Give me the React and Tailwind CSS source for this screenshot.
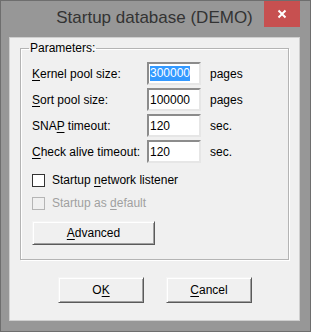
import React from "react";

const sunken =
  "border-2 border-t-[#8c8c8c] border-l-[#8c8c8c] border-r-[#e6e6e6] border-b-[#e6e6e6] bg-white";
const raised =
  "border border-t-[#f4f4f4] border-l-[#f4f4f4] border-r-[#5a5a5a] border-b-[#5a5a5a] shadow-[inset_1px_1px_0_#ffffff,inset_-1px_-1px_0_#a0a0a0] bg-[#f0f0f0]";

function Row({ label, u, value, unit, selected }) {
  const i = label.indexOf(u);
  return (
    <div className="flex h-[23px] items-center">
      <div className="w-[126px] pl-[11px] whitespace-nowrap">
        {label.slice(0, i)}
        <span className="underline underline-offset-2">{u}</span>
        {label.slice(i + 1)}
      </div>
      <div className={`${sunken} w-[54px] h-[23px] flex items-center pl-[1px]`}>
        {selected ? (
          <span className="bg-[#3399ff] text-white leading-[15px]">{value}</span>
        ) : (
          <span>{value}</span>
        )}
      </div>
      <div className="pl-[9px]">{unit}</div>
    </div>
  );
}

export default function App() {
  return (
    <div
      className="w-[311px] h-[332px] bg-[#979797] border border-[#6e6e6e] flex flex-col text-[12px] text-black"
      style={{ fontFamily: '"Liberation Sans", Arial, sans-serif' }}
    >
      <div className="relative h-[36px] flex items-start">
        <div className="flex-1 text-center pt-[4px] text-[17px] text-[#333333] pr-[2px]">
          Startup database (DEMO)
        </div>
        <div className="absolute right-[10px] top-0 w-[36px] h-[26px] bg-[#c75050] flex items-center justify-center">
          <svg width="10" height="10" viewBox="0 0 10 10">
            <path d="M1.5 1.5 L8.5 8.5 M8.5 1.5 L1.5 8.5" stroke="white" strokeWidth="2" />
          </svg>
        </div>
      </div>
      <div className="ml-[8px] mr-[10px] h-[284px] bg-[#f0f0f0] border border-[#cfcfcf] flex flex-col">
        <fieldset className="mx-[10px] mt-[3px] h-[219px] border border-[#b4b4b4] shadow-[inset_1px_1px_0_#ffffff,1px_1px_0_#ffffff] px-0">
          <legend className="ml-[8px] px-[1px] leading-[14px]">Parameters:</legend>
          <div className="flex flex-col gap-[3px] mt-[7px]">
            <Row label="Kernel pool size:" u="K" value="300000" unit="pages" selected />
            <Row label="Sort pool size:" u="S" value="100000" unit="pages" />
            <Row label="SNAP timeout:" u="P" value="120" unit="sec." />
            <Row label="Check alive timeout:" u="C" value="120" unit="sec." />
          </div>
          <div className="flex items-center mt-[10px] ml-[11px] h-[14px]">
            <div className="w-[13px] h-[13px] border border-[#333333] bg-white" />
            <div className="ml-[7px]">
              Startup <span className="underline underline-offset-2">n</span>etwork listener
            </div>
          </div>
          <div className="flex items-center mt-[9px] ml-[11px] h-[14px] text-[#a0a0a0]">
            <div className="w-[13px] h-[13px] border border-[#b5b5b5] bg-[#f0f0f0]" />
            <div className="ml-[7px]">
              Startup as <span className="underline underline-offset-2">d</span>efault
            </div>
          </div>
          <div
            className={`${raised} ml-[11px] mt-[11px] w-[123px] h-[24px] flex items-center justify-center`}
          >
            <span>
              <span className="underline underline-offset-2">A</span>dvanced
            </span>
          </div>
        </fieldset>
        <div className="flex mt-[17px] ml-[48px] gap-[22px]">
          <div className={`${raised} w-[86px] h-[26px] flex items-center justify-center`}>
            <span>
              O<span className="underline underline-offset-2">K</span>
            </span>
          </div>
          <div className={`${raised} w-[86px] h-[26px] flex items-center justify-center`}>
            <span>
              <span className="underline underline-offset-2">C</span>ancel
            </span>
          </div>
        </div>
      </div>
    </div>
  );
}
